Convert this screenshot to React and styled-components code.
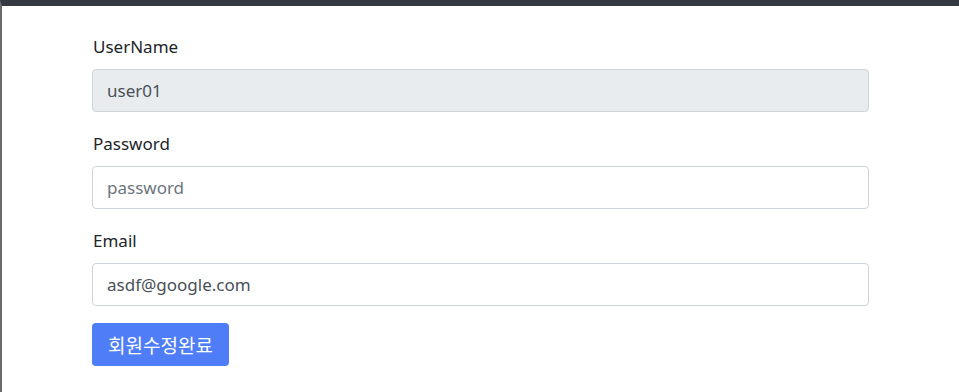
import React, { useState } from 'react';
import styled, { createGlobalStyle } from 'styled-components';

const GlobalStyle = createGlobalStyle`
  html, body {
    margin: 0;
    padding: 0;
    background: #fff;
  }
  body {
    font-family: "Noto Sans", "Noto Sans CJK KR", sans-serif;
  }
`;

const Page = styled.div`
  min-height: 392px;
  box-sizing: border-box;
  border-top: 6px solid #343a40;
  border-left: 2px solid #6b6b6b;
`;

const Container = styled.div`
  width: 777px;
  margin-left: 90px;
  padding-top: 28px;
`;

const Form = styled.form`
  display: flex;
  flex-direction: column;
`;

const Group = styled.div`
  display: flex;
  flex-direction: column;
  margin-bottom: 19px;
`;

const Label = styled.label`
  font-size: 17px;
  line-height: 25px;
  color: #212529;
  margin-bottom: 10px;
  padding-left: 1px;
`;

const Input = styled.input`
  box-sizing: border-box;
  height: 43px;
  width: 100%;
  padding: 0 14px;
  font-family: "Noto Sans", "Noto Sans CJK KR", sans-serif;
  font-size: 17px;
  color: #495057;
  background-color: ${(p) => (p.disabled ? '#e9ecef' : '#fff')};
  border: 1px solid #ced4da;
  border-radius: 4px;
  outline: none;

  &::placeholder {
    color: #6c757d;
  }
`;

const SubmitButton = styled.button`
  align-self: flex-start;
  height: 43px;
  margin-top: -2px;
  padding: 0 16px;
  font-family: "Noto Sans CJK KR", sans-serif;
  font-size: 19px;
  color: #fff;
  background-color: #4e7df7;
  border: none;
  border-radius: 4px;
  cursor: pointer;
`;

const App = () => {
  const [password, setPassword] = useState('');
  const [email, setEmail] = useState('asdf@google.com');

  return (
    <>
      <GlobalStyle />
      <Page>
        <Container>
          <Form onSubmit={(e) => e.preventDefault()}>
            <Group>
              <Label>UserName</Label>
              <Input value="user01" disabled readOnly />
            </Group>
            <Group>
              <Label>Password</Label>
              <Input
                type="password"
                placeholder="password"
                value={password}
                onChange={(e) => setPassword(e.target.value)}
              />
            </Group>
            <Group>
              <Label>Email</Label>
              <Input
                type="email"
                value={email}
                onChange={(e) => setEmail(e.target.value)}
              />
            </Group>
            <SubmitButton type="submit">회원수정완료</SubmitButton>
          </Form>
        </Container>
      </Page>
    </>
  );
};

export default App;
